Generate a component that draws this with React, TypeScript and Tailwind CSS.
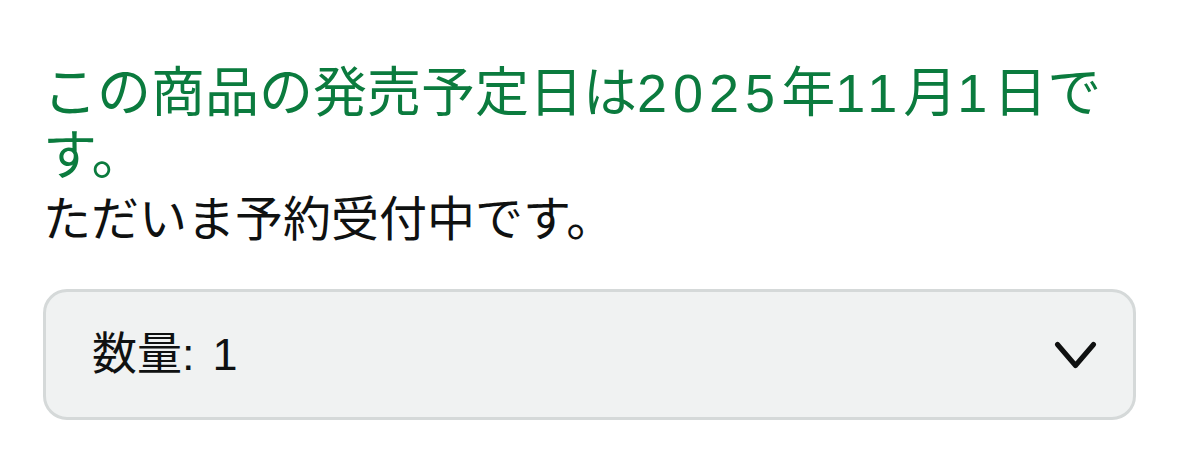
const jp = "font-['Liberation_Sans','Noto_Sans_CJK_JP',sans-serif]";

// Latin digits in the reference run wider than Arial's, so space them out a little.
function Num({ children }: { children: string }) {
  return <span className="tracking-[6px]">{children}</span>;
}

export default function App() {
  return (
    <div className={`${jp} min-h-[472px] bg-white px-[43px] pt-[62px]`}>
      <p className="text-[54px] leading-[63px] text-[#0b7b3e]">
        この商品の発売予定日は<Num>2025</Num>年<Num>11</Num>月<Num>1</Num>日です。
      </p>
      <p className="text-[48px] leading-[63px] text-[#0f1111]">
        ただいま予約受付中です。
      </p>

      <div className="mt-[38px] flex h-[131px] w-full items-center justify-between rounded-[24px] border-[3px] border-[#d5d9d9] bg-[#f0f2f2] pl-[46px] pr-[35px]">
        <span className="text-[45px] text-[#0f1111]">
          数量:<span className="ml-[18px]">1</span>
        </span>
        <svg width="44" height="30" viewBox="0 0 44 30" fill="none" aria-hidden>
          <polyline
            points="3.5,4.5 21.5,25.5 39.5,4.5"
            stroke="#0f1111"
            strokeWidth="5"
            strokeLinecap="round"
            strokeLinejoin="round"
          />
        </svg>
      </div>
    </div>
  );
}
